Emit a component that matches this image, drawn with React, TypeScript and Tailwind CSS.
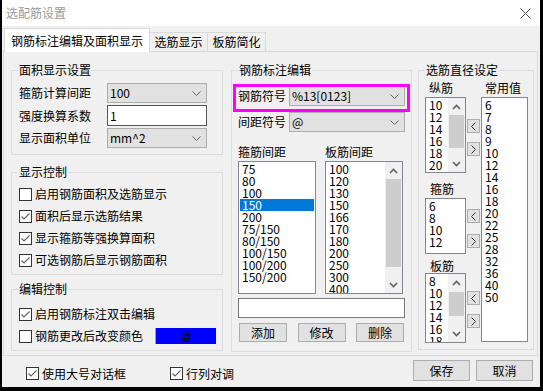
import React from 'react'

const Check = ({ checked }: { checked: boolean }) => (
  <span className="w-[13px] h-[13px] border border-[#333333] bg-white flex items-center justify-center shrink-0">
    {checked && (
      <svg width="11" height="11" viewBox="0 0 11 11">
        <polyline points="1.5,5.5 4,8 9.5,2.5" fill="none" stroke="#666666" strokeWidth="1.2" />
      </svg>
    )}
  </span>
)

const CheckRow = ({ checked, label }: { checked: boolean; label: string }) => (
  <div className="h-[22px] flex items-center gap-[3px]">
    <Check checked={checked} />
    <span>{label}</span>
  </div>
)

const Select = ({ value, w }: { value: string; w: string }) => (
  <div className={`${w} h-[20px] bg-[#e1e1e1] border border-[#adadad] flex items-center justify-between pl-[2px] pr-[5px]`}>
    <span>{value}</span>
    <svg width="9" height="5" viewBox="0 0 9 5">
      <polyline points="0.5,0.5 4.5,4.5 8.5,0.5" fill="none" stroke="#606060" strokeWidth="1" />
    </svg>
  </div>
)

const GroupTitle = ({ children }: { children: React.ReactNode }) => (
  <span className="absolute left-[6px] -top-[8px] px-[1px] bg-[#f0f0f0] leading-[14px]">{children}</span>
)

type Bar = { thumb: string }

const ListBox = ({
  items,
  box,
  selected,
  bar,
}: {
  items: string[]
  box: string
  selected?: number
  bar?: Bar
}) => (
  <div className={`${box} bg-white border border-[#828790] flex overflow-hidden shrink-0`}>
    <div className="flex-1 p-[1px] overflow-hidden">
      {items.map((it, i) => (
        <div
          key={i}
          className={`h-[12px] leading-[12px] pl-[2px] whitespace-nowrap ${i === selected ? 'bg-[#0078d7] text-white' : ''}`}
        >
          {it}
        </div>
      ))}
    </div>
    {bar && (
      <div className="w-[17px] bg-[#f0f0f0] flex flex-col">
        <div className="h-[17px] flex items-center justify-center shrink-0">
          <svg width="9" height="6" viewBox="0 0 9 6">
            <polyline points="1,5 4.5,1.5 8,5" fill="none" stroke="#606060" strokeWidth="1.6" />
          </svg>
        </div>
        <div className="flex-1 px-[1px]">
          <div className={`${bar.thumb} bg-[#cdcdcd]`} />
        </div>
        <div className="h-[17px] flex items-center justify-center shrink-0">
          <svg width="9" height="6" viewBox="0 0 9 6">
            <polyline points="1,1 4.5,4.5 8,1" fill="none" stroke="#606060" strokeWidth="1.6" />
          </svg>
        </div>
      </div>
    )}
  </div>
)

const ArrowBtn = ({ dir, cls }: { dir: 'left' | 'right'; cls: string }) => (
  <div className={`${cls} w-[13px] h-[14px] bg-[#e1e1e1] border border-[#adadad] flex items-center justify-center`}>
    <svg width="5" height="9" viewBox="0 0 5 9">
      {dir === 'left' ? (
        <polyline points="4.5,0.5 0.5,4.5 4.5,8.5" fill="none" stroke="#333333" strokeWidth="1" />
      ) : (
        <polyline points="0.5,0.5 4.5,4.5 0.5,8.5" fill="none" stroke="#333333" strokeWidth="1" />
      )}
    </svg>
  </div>
)

const Btn = ({ label, cls }: { label: string; cls: string }) => (
  <div className={`${cls} bg-[#e1e1e1] border border-[#adadad] flex items-center justify-center`}>{label}</div>
)

export default function App() {
  return (
    <div className="w-[543px] h-[391px] bg-black overflow-hidden text-[12px] text-black font-['Noto_Sans_CJK_SC','Liberation_Sans',sans-serif]">
      <div className="ml-[2px] w-[538px] h-[387px] bg-[#f0f0f0] flex flex-col">
        {/* Title bar */}
        <div className="h-[26px] bg-white flex items-center justify-between pl-[4px] pr-[9px] shrink-0">
          <span className="text-[#9a9a9a]">选配筋设置</span>
          <svg width="11" height="11" viewBox="0 0 11 11">
            <line x1="0.5" y1="0.5" x2="10.5" y2="10.5" stroke="#555555" strokeWidth="1" />
            <line x1="10.5" y1="0.5" x2="0.5" y2="10.5" stroke="#555555" strokeWidth="1" />
          </svg>
        </div>

        {/* Tabs */}
        <div className="h-[25px] flex items-end pl-[2px] shrink-0">
          <div className="relative z-10 -mb-[1px] h-[24px] w-[146px] bg-white border-l border-t border-r border-[#d9d9d9] flex items-center justify-center">
            钢筋标注编辑及面积显示
          </div>
          <div className="h-[19px] w-[58px] border-t border-r border-[#d9d9d9] flex items-center justify-center">选筋显示</div>
          <div className="h-[19px] w-[58px] border-t border-r border-[#d9d9d9] flex items-center justify-center">板筋简化</div>
        </div>

        {/* Panel */}
        <div className="ml-[1px] w-[535px] h-[305px] border border-[#d9d9d9] flex pl-[7px] pt-[18px] shrink-0">
          {/* Left column */}
          <div className="w-[212px] flex flex-col">
            <div className="relative h-[85px] border border-[#dcdcdc] pl-[7px] pt-[12px] flex flex-col gap-[2px]">
              <GroupTitle>面积显示设置</GroupTitle>
              <div className="flex items-center">
                <span className="w-[88px]">箍筋计算间距</span>
                <Select value="100" w="w-[100px]" />
              </div>
              <div className="flex items-center">
                <span className="w-[88px]">强度换算系数</span>
                <div className="w-[100px] h-[21px] bg-white border border-[#555555] flex items-center pl-[2px]">1</div>
              </div>
              <div className="flex items-center">
                <span className="w-[88px]">显示面积单位</span>
                <Select value="mm^2" w="w-[100px]" />
              </div>
            </div>

            <div className="relative mt-[17px] h-[103px] border border-[#dcdcdc] pl-[7px] pt-[10px]">
              <GroupTitle>显示控制</GroupTitle>
              <CheckRow checked={false} label="启用钢筋面积及选筋显示" />
              <CheckRow checked label="面积后显示选筋结果" />
              <CheckRow checked label="显示箍筋等强换算面积" />
              <CheckRow checked label="可选钢筋后显示钢筋面积" />
            </div>

            <div className="relative mt-[14px] h-[62px] border border-[#dcdcdc] pl-[7px] pt-[13px]">
              <GroupTitle>编辑控制</GroupTitle>
              <CheckRow checked label="启用钢筋标注双击编辑" />
              <div className="h-[22px] flex items-center gap-[3px]">
                <Check checked={false} />
                <span>钢筋更改后改变颜色</span>
                <div className="ml-[9px] w-[61px] h-[16px] bg-[#0000ff] border-l border-[#a0a0a0] flex items-center justify-center">
                  蓝
                </div>
              </div>
            </div>
          </div>

          {/* Middle column */}
          <div className="relative ml-[8px] w-[181px] h-[282px] border border-[#dcdcdc] pl-[6px] pt-[15px]">
            <GroupTitle>钢筋标注编辑</GroupTitle>
            <div className="flex items-center">
              <span className="w-[51px]">钢筋符号</span>
              <Select value="%13[0123]" w="w-[116px]" />
            </div>
            <div className="flex items-center mt-[6px]">
              <span className="w-[51px]">间距符号</span>
              <Select value="@" w="w-[116px]" />
            </div>
            <div className="flex mt-[13px] h-[14px] leading-[14px]">
              <span className="w-[87px]">箍筋间距</span>
              <span>板筋间距</span>
            </div>
            <div className="flex gap-[9px] mt-[2px]">
              <ListBox
                box="w-[78px] h-[133px]"
                items={['75', '80', '100', '150', '200', '75/150', '80/150', '100/150', '100/200', '150/200']}
                selected={3}
              />
              <ListBox
                box="w-[78px] h-[133px]"
                items={['100', '120', '130', '150', '166', '170', '180', '200', '250', '300', '400']}
                bar={{ thumb: 'h-[88px]' }}
              />
            </div>
            <div className="mt-[4px] w-[167px] h-[20px] bg-white border border-[#7a7a7a]" />
            <div className="mt-[5px] ml-[1px] w-[165px] flex justify-between">
              <Btn label="添加" cls="w-[48px] h-[19px]" />
              <Btn label="修改" cls="w-[48px] h-[19px]" />
              <Btn label="删除" cls="w-[48px] h-[19px]" />
            </div>
            <div className="absolute left-[1px] top-[13px] w-[177px] h-[28px] border-[3px] border-[#ff00ff]" />
          </div>

          {/* Right column */}
          <div className="relative ml-[6px] w-[116px] h-[280px] border border-[#dcdcdc] pl-[6px] pt-[10px] flex">
            <GroupTitle>选筋直径设定</GroupTitle>
            <div className="w-[56px] flex flex-col">
              <span className="ml-[4px] h-[14px] leading-[14px]">纵筋</span>
              <div className="flex mt-[2px]">
                <ListBox
                  box="w-[41px] h-[76px]"
                  items={['10', '12', '14', '16', '18', '20', '22']}
                  bar={{ thumb: 'h-[33px]' }}
                />
                <div className="ml-[1px] flex flex-col">
                  <ArrowBtn dir="left" cls="mt-[22px]" />
                  <ArrowBtn dir="right" cls="mt-[9px]" />
                </div>
              </div>
              <span className="ml-[5px] mt-[9px] h-[14px] leading-[14px]">箍筋</span>
              <div className="flex mt-[2px]">
                <ListBox box="w-[41px] h-[56px]" items={['6', '8', '10', '12']} />
                <div className="ml-[1px] flex flex-col">
                  <ArrowBtn dir="left" cls="mt-[11px]" />
                  <ArrowBtn dir="right" cls="mt-[11px]" />
                </div>
              </div>
              <span className="ml-[5px] mt-[5px] h-[14px] leading-[14px]">板筋</span>
              <div className="flex">
                <ListBox
                  box="w-[41px] h-[70px]"
                  items={['8', '10', '12', '14', '16', '18']}
                  bar={{ thumb: 'mt-[1px] h-[24px]' }}
                />
                <div className="ml-[1px] flex flex-col">
                  <ArrowBtn dir="left" cls="mt-[18px]" />
                  <ArrowBtn dir="right" cls="mt-[9px]" />
                </div>
              </div>
            </div>
            <div className="flex flex-col">
              <span className="ml-[4px] h-[14px] leading-[14px]">常用值</span>
              <div className="mt-[2px]">
                <ListBox
                  box="w-[47px] h-[245px]"
                  items={['6', '7', '8', '9', '10', '12', '14', '16', '18', '20', '22', '25', '28', '32', '36', '40', '50']}
                />
              </div>
            </div>
          </div>
        </div>

        {/* Bottom bar */}
        <div className="flex items-start pl-[24px] pr-[7px]">
          <div className="mt-[11px] flex items-center gap-[3px]">
            <Check checked />
            <span className="leading-[13px]">使用大号对话框</span>
          </div>
          <div className="ml-[44px] mt-[11px] flex items-center gap-[3px]">
            <Check checked />
            <span className="leading-[13px]">行列对调</span>
          </div>
          <div className="ml-auto mt-[4px] flex gap-[6px]">
            <Btn label="保存" cls="w-[57px] h-[21px]" />
            <Btn label="取消" cls="w-[57px] h-[21px]" />
          </div>
        </div>
      </div>
    </div>
  )
}
